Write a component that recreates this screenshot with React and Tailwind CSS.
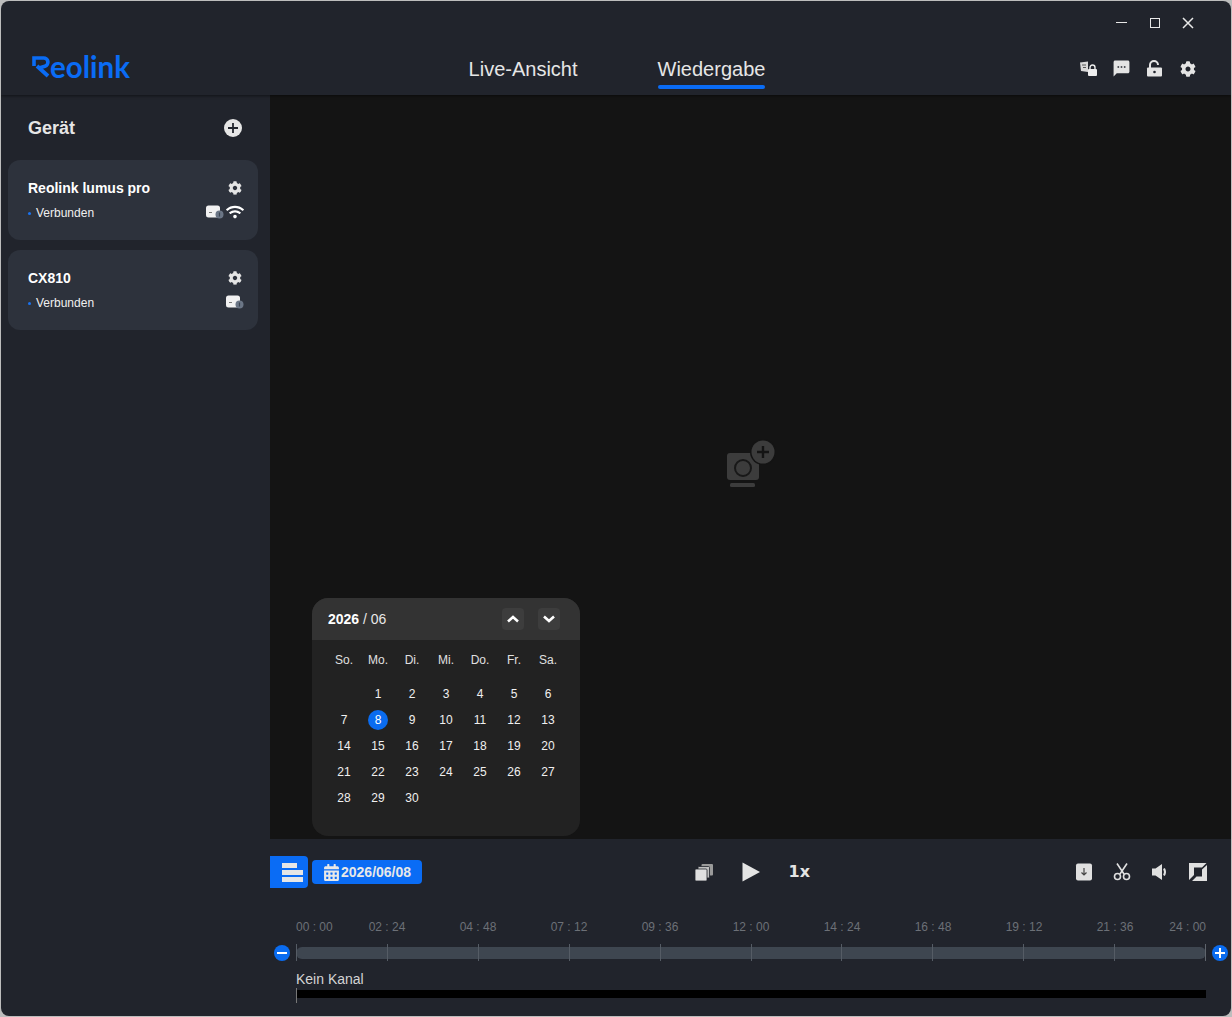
import React from 'react'
import { FaCog, FaWifi, FaCalendarAlt } from 'react-icons/fa'
import { MdSms } from 'react-icons/md'

const days = [
  ['', '1', '2', '3', '4', '5', '6'],
  ['7', '8', '9', '10', '11', '12', '13'],
  ['14', '15', '16', '17', '18', '19', '20'],
  ['21', '22', '23', '24', '25', '26', '27'],
  ['28', '29', '30', '', '', '', ''],
]
const weekdays = ['So.', 'Mo.', 'Di.', 'Mi.', 'Do.', 'Fr.', 'Sa.']
const hours = ['02 : 24', '04 : 48', '07 : 12', '09 : 36', '12 : 00', '14 : 24', '16 : 48', '19 : 12', '21 : 36']

function CameraBadge() {
  return (
    <svg width="18" height="14" viewBox="0 0 18 14">
      <rect x="0" y="0.5" width="14" height="12" rx="2.5" fill="#f2f2f2" />
      <rect x="3" y="7" width="3" height="1" fill="#777" />
      <circle cx="13.5" cy="9.5" r="4" fill="#6b7686" />
      <rect x="12.9" y="7.5" width="1.2" height="4" fill="#3d4654" />
    </svg>
  )
}

function DeviceCard({ name, wifi }) {
  return (
    <div className="h-20 rounded-xl bg-[#2d323c] pl-5 pr-[14px] pt-[18px]">
      <div className="flex h-5 items-center justify-between">
        <span className="text-sm font-bold text-white">{name}</span>
        <FaCog className="mr-[2px] text-[14px] text-[#e4e4e4]" />
      </div>
      <div className="mt-[5px] flex h-5 items-center justify-between">
        <div className="flex items-center">
          <span className="mr-[5px] h-[3px] w-[3px] rounded-full bg-[#1a73f0]" />
          <span className="text-xs text-[#f0f0f0]">Verbunden</span>
        </div>
        <div className="mb-[3px] flex items-center gap-[2px]">
          <CameraBadge />
          {wifi && <FaWifi className="text-[18px] text-white" />}
        </div>
      </div>
    </div>
  )
}

function Chevron({ d }) {
  return (
    <svg width="12" height="8" viewBox="0 0 12 8">
      <path d={d} fill="none" stroke="#fff" strokeWidth="2.6" />
    </svg>
  )
}

function Calendar() {
  return (
    <div className="absolute bottom-[3px] left-[42px] h-[238px] w-[268px] overflow-hidden rounded-2xl bg-[#222222]">
      <div className="flex h-[42px] items-center justify-between bg-[#333333] pl-4 pr-[20px]">
        <div className="text-sm text-[#e8e8e8]">
          <span className="font-bold text-white">2026</span> / 06
        </div>
        <div className="flex gap-[14px]">
          <button className="flex h-[22px] w-[22px] items-center justify-center rounded bg-[#3d3d3d]">
            <Chevron d="M1 6.5 6 2l5 4.5" />
          </button>
          <button className="flex h-[22px] w-[22px] items-center justify-center rounded bg-[#3d3d3d]">
            <Chevron d="M1 1.5 6 6l5-4.5" />
          </button>
        </div>
      </div>
      <div className="px-[15px] pt-[7px]">
        <div className="mb-[8px] grid h-[26px] grid-cols-7 items-center text-center text-xs text-[#e0e0e0]">
          {weekdays.map((d) => (
            <div key={d}>{d}</div>
          ))}
        </div>
        {days.map((row, i) => (
          <div key={i} className="grid h-[26px] grid-cols-7 items-center text-center text-xs text-[#f0f0f0]">
            {row.map((d, j) => (
              <div key={j} className="flex justify-center">
                {d === '8' ? (
                  <span className="flex h-5 w-5 items-center justify-center rounded-full bg-[#0a6cf0] text-white">{d}</span>
                ) : (
                  d
                )}
              </div>
            ))}
          </div>
        ))}
      </div>
    </div>
  )
}

function Timeline() {
  return (
    <div className="pt-[31px]">
      <div className="ml-[26px] flex w-[910px] text-xs text-[#6c7077]">
        <div className="w-[45.5px] whitespace-nowrap">00 : 00</div>
        {hours.map((h) => (
          <div key={h} className="w-[91px] text-center">{h}</div>
        ))}
        <div className="flex w-[45.5px] justify-end whitespace-nowrap">24 : 00</div>
      </div>
      <div className="mt-[9px] flex h-[17px] items-center">
        <div className="ml-[4px] mr-[6px] flex h-4 w-4 items-center justify-center rounded-full bg-[#0a6cf0]">
          <span className="h-[2px] w-[10px] bg-white" />
        </div>
        <div className="relative h-full w-[910px]">
          <div className="absolute inset-x-0 top-[3px] h-3 rounded-md bg-[#3e4650]" />
          <div className="relative grid h-full grid-cols-10 border-r border-[#5f656d]">
            {Array.from({ length: 10 }).map((_, i) => (
              <div key={i} className="h-full border-l border-[#555c65]" />
            ))}
          </div>
        </div>
        <div className="ml-[6px] flex h-4 w-4 items-center justify-center rounded-full bg-[#0a6cf0]">
          <svg width="10" height="10" viewBox="0 0 10 10">
            <path d="M0 5h10M5 0v10" stroke="#fff" strokeWidth="2" />
          </svg>
        </div>
      </div>
      <div className="ml-[26px] mt-[10px] text-sm leading-4 text-[#d4d4d4]">Kein Kanal</div>
      <div className="ml-[26px] mt-px flex h-[15px] w-[910px] border-l border-[#777]">
        <div className="mt-[2px] h-2 w-full bg-black" />
      </div>
    </div>
  )
}

export default function App() {
  return (
    <div className="h-[1017px] w-[1232px] overflow-hidden bg-[#bdbdbd] p-px font-['Liberation_Sans',Arial,sans-serif]">
      <div className="flex h-full flex-col overflow-hidden rounded-lg bg-[#21242c]">
        {/* Title bar + nav */}
        <div className="relative z-10 h-[94px] shrink-0 shadow-[0_1px_3px_rgba(0,0,0,0.5)]">
          <div className="flex h-[43px] items-center justify-end pr-[27px] text-[#e8e8e8]">
            <div className="flex w-[33px] justify-center">
              <span className="h-px w-[11px] bg-[#e8e8e8]" />
            </div>
            <div className="flex w-[33px] justify-center">
              <span className="h-[10px] w-[10px] border-[1.5px] border-[#e8e8e8]" />
            </div>
            <div className="flex w-[33px] justify-center">
              <svg width="12" height="12" viewBox="0 0 12 12">
                <path d="M1 1l10 10M11 1L1 11" stroke="#e8e8e8" strokeWidth="1.5" />
              </svg>
            </div>
          </div>
          <div className="flex h-[51px] items-start">
            <div className="flex flex-1 items-center pl-[31px] pt-[8px] text-[#0a6cf5]">
              <svg width="19" height="22" viewBox="0 0 19 22" className="mr-[-1px] mt-[1px]">
                <path d="M2 10V2h9.5a4.2 4.2 0 0 1 1.5 8.2L7 12" fill="none" stroke="#0a6cf5" strokeWidth="3.6" />
                <path d="M5 10l11 10" stroke="#0a6cf5" strokeWidth="3.8" />
              </svg>
              <span className="font-['Lato',sans-serif] text-[29.5px] font-bold leading-none">eolink</span>
            </div>
            <div className="mr-[2px] flex items-start gap-[80px] text-xl leading-[24px] text-[#e6e6e6]">
              <div className="pt-[13px]">Live-Ansicht</div>
              <div className="flex flex-col pt-[13px]">
                <span>Wiedergabe</span>
                <span className="mt-1 h-1 rounded-sm bg-[#0a6cf5]" />
              </div>
            </div>
            <div className="flex flex-1 items-center justify-end pr-[27px] pt-[15px] text-[#e4e4e4]">
              <div className="flex w-[33px] justify-center">
                <svg width="18" height="16" viewBox="0 0 18 16">
                  <path d="M0 1.5 8 0.5V11L1 10z" fill="#d8d8d8" />
                  <path d="M2 4h4M3 6.5h3" stroke="#555" strokeWidth="1" />
                  <rect x="8" y="8" width="9" height="7" rx="1" fill="#eee" />
                  <path d="M10 8V6.5a2.5 2.5 0 0 1 5 0V8" fill="none" stroke="#eee" strokeWidth="1.4" />
                </svg>
              </div>
              <div className="flex w-[33px] justify-center">
                <MdSms className="text-[19px]" />
              </div>
              <div className="flex w-[33px] justify-center">
                <svg width="17" height="17" viewBox="0 0 17 17">
                  <path d="M4 8V5a4 4 0 0 1 8 0" fill="none" stroke="#e4e4e4" strokeWidth="2" />
                  <rect x="1" y="7.5" width="15" height="9" rx="1" fill="#e4e4e4" />
                  <circle cx="8.5" cy="12" r="1.3" fill="#21242c" />
                </svg>
              </div>
              <div className="flex w-[33px] justify-center">
                <FaCog className="text-[16px]" />
              </div>
            </div>
          </div>
        </div>

        <div className="flex min-h-0 flex-1">
          {/* Sidebar */}
          <div className="w-[269px] shrink-0 pl-[7px] pr-[12px]">
            <div className="flex h-[65px] items-center justify-between pl-5 pr-4">
              <span className="text-lg font-bold text-[#e6e6e6]">Gerät</span>
              <div className="flex h-[18px] w-[18px] items-center justify-center rounded-full bg-[#e6e6e6]">
                <svg width="10" height="10" viewBox="0 0 10 10">
                  <path d="M0 5h10M5 0v10" stroke="#22252d" strokeWidth="1.8" />
                </svg>
              </div>
            </div>
            <div className="flex flex-col gap-[10px]">
              <DeviceCard name="Reolink lumus pro" wifi />
              <DeviceCard name="CX810" />
            </div>
          </div>

          {/* Main */}
          <div className="flex min-w-0 flex-1 flex-col">
            <div className="relative flex h-[744px] shrink-0 items-center justify-center bg-[#141414] pb-[6px]">
              <svg width="50" height="50" viewBox="0 0 50 50">
                <rect x="1" y="14" width="32" height="27" rx="3" fill="#3c3c3c" />
                <circle cx="17" cy="29" r="8" fill="#3c3c3c" stroke="#181818" strokeWidth="2" />
                <rect x="4" y="44" width="25" height="4" rx="1.5" fill="#3c3c3c" />
                <circle cx="37" cy="13" r="13" fill="#141414" />
                <circle cx="37" cy="13" r="11.5" fill="#3c3c3c" />
                <path d="M31 13h12M37 7v12" stroke="#141414" strokeWidth="2.4" />
              </svg>
              <Calendar />
            </div>

            <div className="flex-1">
              <div className="mt-[17px] flex h-[32px] items-center pr-[24px]">
                <div className="flex flex-1 items-center gap-1">
                  <button className="flex h-8 w-[38px] flex-col items-start justify-center gap-[2px] rounded-r-sm bg-[#0a6cf5] pl-3">
                    <span className="h-[5px] w-[15px] bg-[#e6e6e6]" />
                    <span className="h-[5px] w-[21px] bg-[#e6e6e6]" />
                    <span className="h-[5px] w-[21px] bg-[#e6e6e6]" />
                  </button>
                  <div className="flex h-6 w-[110px] items-center gap-[1px] rounded bg-[#0a6cf5] pl-[11px] text-sm font-bold text-[#e8e8e8]">
                    <FaCalendarAlt className="text-[17px]" />
                    2026/06/08
                  </div>
                </div>
                <div className="flex items-center gap-[29px] pl-[28px]">
                  <svg width="18" height="17" viewBox="0 0 18 17">
                    <rect x="6.5" y="0" width="11.5" height="11.5" rx="1" fill="#9a9a9a" />
                    <rect x="3" y="2.5" width="11.5" height="11.5" rx="1" fill="#c0c0c0" stroke="#21242c" strokeWidth="0.8" />
                    <rect x="0" y="5" width="12" height="12" rx="1" fill="#e0e0e0" stroke="#21242c" strokeWidth="0.8" />
                  </svg>
                  <svg width="18" height="20" viewBox="0 0 18 20">
                    <path d="M0.5 0.5 18 10 0.5 19.5z" fill="#e4e4e4" />
                  </svg>
                  <span className="w-[22px] font-['DejaVu_Sans',sans-serif] text-[16px] font-bold text-[#e4e4e4]">1x</span>
                </div>
                <div className="flex flex-1 items-center justify-end gap-[20px] text-[#e0e0e0]">
                  <svg width="18" height="18" viewBox="0 0 18 18">
                    <rect x="1" y="0.5" width="16" height="17" rx="2" fill="#e0e0e0" />
                    <path d="M9 5v7M6.5 9.5 9 12l2.5-2.5" fill="none" stroke="#444" strokeWidth="1.2" />
                  </svg>
                  <svg width="18" height="18" viewBox="0 0 18 18">
                    <path d="M4 0.5 11 11M14 0.5 7 11" fill="none" stroke="#e0e0e0" strokeWidth="1.6" />
                    <circle cx="4.5" cy="13.5" r="3" fill="none" stroke="#e0e0e0" strokeWidth="1.6" />
                    <circle cx="13.5" cy="13.5" r="3" fill="none" stroke="#e0e0e0" strokeWidth="1.6" />
                  </svg>
                  <svg width="18" height="18" viewBox="0 0 18 18">
                    <path d="M1 5.5h3.5L11 1v16l-6.5-4.5H1z" fill="#e0e0e0" />
                    <path d="M13 5.5q2 3.5 0 7" fill="none" stroke="#e0e0e0" strokeWidth="2" />
                  </svg>
                  <svg width="18" height="18" viewBox="0 0 18 18">
                    <path d="M0 0h17.5l-4.5 4.5H5V12L0 17z" fill="#e0e0e0" />
                    <path d="M18 18H3l4.5-4.5H13V6.5L18 2z" fill="#e0e0e0" />
                  </svg>
                </div>
              </div>
              <Timeline />
            </div>
          </div>
        </div>
      </div>
    </div>
  )
}
